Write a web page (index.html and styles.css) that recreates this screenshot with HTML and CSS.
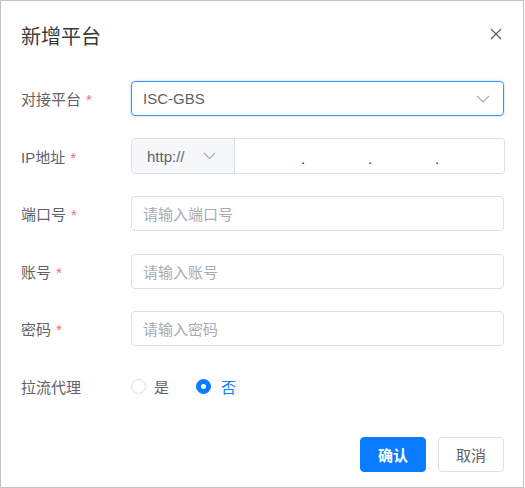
FILE: index.html
```html
<!DOCTYPE html>
<html lang="zh-CN">
<head>
<meta charset="utf-8">
<title>新增平台</title>
<link rel="stylesheet" href="styles.css">
</head>
<body>
<div class="dialog">
  <div class="header">
    <span class="title">新增平台</span>
    <svg class="close" width="12" height="12" viewBox="0 0 12 12"><path d="M1 1 L11 11 M11 1 L1 11" stroke="#5a5e66" stroke-width="1.3" fill="none"/></svg>
  </div>
  <div class="form">
    <div class="row">
      <div class="label">对接平台<span class="star">*</span></div>
      <div class="control input select focus">
        <span class="value">ISC-GBS</span>
        <svg class="chev" width="14" height="8" viewBox="0 0 14 8"><path d="M1 1 L7 7 L13 1" stroke="#a8abb2" stroke-width="1.2" fill="none"/></svg>
      </div>
    </div>
    <div class="row">
      <div class="label">IP地址<span class="star">*</span></div>
      <div class="control input ip">
        <div class="prefix">
          <span class="value">http://</span>
          <svg class="chev" width="13" height="8" viewBox="0 0 13 8"><path d="M1 1 L6.5 6.5 L12 1" stroke="#a8abb2" stroke-width="1.2" fill="none"/></svg>
        </div>
        <div class="octets">
          <span class="seg"></span><span class="dot">.</span>
          <span class="seg"></span><span class="dot">.</span>
          <span class="seg"></span><span class="dot">.</span>
          <span class="seg"></span>
        </div>
      </div>
    </div>
    <div class="row">
      <div class="label">端口号<span class="star">*</span></div>
      <div class="control input"><span class="ph">请输入端口号</span></div>
    </div>
    <div class="row">
      <div class="label">账号<span class="star">*</span></div>
      <div class="control input"><span class="ph">请输入账号</span></div>
    </div>
    <div class="row">
      <div class="label">密码<span class="star">*</span></div>
      <div class="control input"><span class="ph">请输入密码</span></div>
    </div>
    <div class="row radio-row">
      <div class="label">拉流代理</div>
      <div class="control radios">
        <span class="radio"><span class="circle"></span><span class="rtext">是</span></span>
        <span class="radio checked"><span class="circle"></span><span class="rtext">否</span></span>
      </div>
    </div>
  </div>
  <div class="footer">
    <span class="btn primary">确认</span>
    <span class="btn">取消</span>
  </div>
</div>
</body>
</html>
```
FILE: styles.css
```css
* { box-sizing: border-box; }
html, body { margin: 0; padding: 0; background: #fff; }
body {
  font-family: "Liberation Sans", Arial, "Noto Sans CJK SC", sans-serif;
  color: #606266;
}
.dialog {
  width: 524px;
  height: 488px;
  border: 1px solid #c2c2c2;
  background: #fff;
  display: flex;
  flex-direction: column;
}
.header {
  display: flex;
  justify-content: space-between;
  align-items: flex-start;
  padding: 24px 21px 0 20px;
  height: 80px;
}
.title {
  font-size: 20px;
  line-height: 24px;
  color: #3a3a3a;
}
.close { margin-top: 3px; }
.form {
  display: flex;
  flex-direction: column;
  gap: 22.5px;
  padding: 0 19px 0 20px;
}
.row {
  display: flex;
  align-items: center;
  height: 35px;
}
.label {
  width: 110px;
  flex: none;
  font-size: 15px;
  color: #606266;
}
.star { color: #f56c6c; margin-left: 5px; }
.control { flex: 1; height: 35px; }
.input {
  border: 1px solid #dcdfe6;
  border-radius: 4px;
  display: flex;
  align-items: center;
  padding: 0 11px;
  font-size: 15px;
}
.input.focus {
  border-color: #3f93fb;
  box-shadow: 0 0 2px 0 rgba(64,158,255,0.55);
}
.select { justify-content: space-between; padding-right: 13px; }
.value { color: #606266; }
.ph { color: #a8abb2; }
.ip { padding: 0; height: 36px; }
.prefix {
  width: 103px;
  height: 100%;
  background: #f5f7fa;
  border-right: 1px solid #dcdfe6;
  border-radius: 4px 0 0 4px;
  display: flex;
  align-items: center;
  justify-content: space-between;
  padding: 0 18px 0 15px;
}
.octets {
  flex: 1;
  display: flex;
  align-items: center;
  height: 100%;
}
.seg { width: 67px; flex: none; }
.seg:last-child { flex: 1; }
.octets .seg:first-child { width: 68px; }
.dot { color: #303133; font-size: 15px; width: 0; position: relative; top: 2px; left: -2px; }
.radios { display: flex; align-items: center; border: none; height: auto; }
.radio { display: flex; align-items: center; font-size: 15px; color: #606266; margin-right: 27px; }
.circle {
  width: 15px; height: 15px; border-radius: 50%;
  border: 1px solid #dcdfe6; background: #fff;
  margin-right: 8px;
  position: relative;
}
.checked .circle { background: #0a7cff; border-color: #0a7cff; }
.checked .circle::after {
  content: ""; position: absolute; left: 4px; top: 4px;
  width: 5px; height: 5px; border-radius: 50%; background: #fff;
}
.checked .rtext { color: #0a7cff; margin-left: 2px; }
.footer {
  margin-top: auto;
  display: flex;
  justify-content: flex-end;
  gap: 12px;
  padding: 0 19px 15px 0;
}
.btn {
  width: 66px;
  height: 35px;
  border: 1px solid #dcdfe6;
  border-radius: 4px;
  display: flex;
  align-items: center;
  justify-content: center;
  font-size: 15px;
  color: #606266;
  background: #fff;
}
.btn.primary {
  background: #0a7cff;
  border-color: #0a7cff;
  color: #fff;
  font-weight: bold;
}
```
